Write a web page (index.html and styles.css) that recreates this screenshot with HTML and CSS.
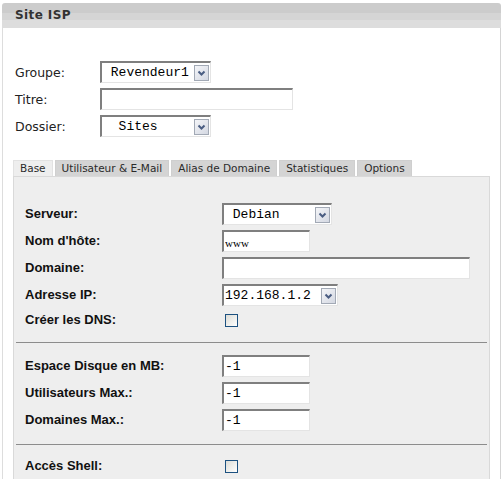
FILE: index.html
```html
<!DOCTYPE html>
<html lang="fr">
<head>
  <meta charset="UTF-8">
  <title>Site ISP</title>
  <link rel="stylesheet" href="styles.css">
</head>
<body>
  <div class="box">
    <div class="box-head">Site ISP</div>
    <div class="box-body">
      <div class="top-form">
        <div class="top-row">
          <label>Groupe:</label>
          <div class="select sel-group">
            <span class="select-value">&nbsp;Revendeur1</span>
            <span class="select-btn"><svg width="13" height="14" viewBox="0 0 13 14"><polyline points="3.5,5.5 6.5,8.5 9.5,5.5" fill="none" stroke="#4a5d82" stroke-width="2"/></svg></span>
          </div>
        </div>
        <div class="top-row">
          <label>Titre:</label>
          <input class="text-input in-title" type="text" value="">
        </div>
        <div class="top-row">
          <label>Dossier:</label>
          <div class="select sel-group">
            <span class="select-value">&nbsp;&nbsp;Sites</span>
            <span class="select-btn"><svg width="13" height="14" viewBox="0 0 13 14"><polyline points="3.5,5.5 6.5,8.5 9.5,5.5" fill="none" stroke="#4a5d82" stroke-width="2"/></svg></span>
          </div>
        </div>
      </div>

      <div class="tabs">
        <span class="tab active">Base</span>
        <span class="tab">Utilisateur &amp; E-Mail</span>
        <span class="tab">Alias de Domaine</span>
        <span class="tab">Statistiques</span>
        <span class="tab">Options</span>
      </div>

      <div class="tab-panel">
        <div class="field-row">
          <label>Serveur:</label>
          <div class="select sel-server">
            <span class="select-value">&nbsp;Debian</span>
            <span class="select-btn"><svg width="13" height="14" viewBox="0 0 13 14"><polyline points="3.5,5.5 6.5,8.5 9.5,5.5" fill="none" stroke="#4a5d82" stroke-width="2"/></svg></span>
          </div>
        </div>
        <div class="field-row">
          <label>Nom d'hôte:</label>
          <input class="text-input in-short in-host" type="text" value="www">
        </div>
        <div class="field-row">
          <label>Domaine:</label>
          <input class="text-input in-long" type="text" value="">
        </div>
        <div class="field-row">
          <label>Adresse IP:</label>
          <div class="select sel-ip">
            <span class="select-value">192.168.1.2</span>
            <span class="select-btn"><svg width="13" height="14" viewBox="0 0 13 14"><polyline points="3.5,5.5 6.5,8.5 9.5,5.5" fill="none" stroke="#4a5d82" stroke-width="2"/></svg></span>
          </div>
        </div>
        <div class="field-row check-row">
          <label>Créer les DNS:</label>
          <span class="checkbox"></span>
        </div>

        <hr>

        <div class="field-row">
          <label>Espace Disque en MB:</label>
          <input class="text-input in-short" type="text" value="-1">
        </div>
        <div class="field-row">
          <label>Utilisateurs Max.:</label>
          <input class="text-input in-short" type="text" value="-1">
        </div>
        <div class="field-row">
          <label>Domaines Max.:</label>
          <input class="text-input in-short" type="text" value="-1">
        </div>

        <hr>

        <div class="field-row check-row">
          <label>Accès Shell:</label>
          <span class="checkbox"></span>
        </div>
      </div>
    </div>
  </div>
</body>
</html>
```

FILE: styles.css
```css
body {
  margin: 0;
  background: #fff;
  font-family: "DejaVu Sans", Verdana, sans-serif;
  color: #222;
}
.box {
  margin: 3px 2px 0 2px;
}
.box-head {
  height: 25px;
  line-height: 25px;
  padding-left: 13px;
  border-radius: 3px 3px 0 0;
  background: linear-gradient(#cccccc 0, #cccccc 10px, #d5d5d5 10px, #d5d5d5 17px, #dddddd 17px, #dddddd 25px);
  font-size: 12px;
  font-weight: bold;
  letter-spacing: 0.4px;
  color: #333;
}
.box-body {
  border-left: 1px solid #dddddd;
  border-right: 1px solid #d4d4d4;
  padding: 33px 10px 0 10px;
}

/* top form */
.top-form {
  display: flex;
  flex-direction: column;
  gap: 5px;
  padding-left: 2px;
}
.top-row {
  display: flex;
  align-items: center;
  height: 22px;
}
.top-row label {
  width: 85px;
  font-size: 12.5px;
  color: #222;
}

/* fake selects and inputs */
.select,
.text-input {
  box-sizing: border-box;
  height: 22px;
  margin: 0;
  background: #fff;
  border-style: solid;
  border-width: 2px 1px 1px 2px;
  border-color: #7f7f7f #e4e4e4 #e4e4e4 #7f7f7f;
}
.select {
  display: flex;
  align-items: center;
  justify-content: space-between;
  padding-left: 1px;
}
.select-value {
  font-family: "Liberation Mono", "Courier New", monospace;
  font-size: 13px;
  color: #000;
  white-space: pre;
}
.select-btn {
  box-sizing: border-box;
  width: 15px;
  height: 16px;
  margin-right: 1px;
  border: 1px solid #a2a9b5;
  background: linear-gradient(135deg, #f4f5f8, #d4d8e2);
  display: flex;
  align-items: center;
  justify-content: center;
}
.sel-group { width: 111px; }
.sel-server { width: 110px; }
.sel-ip { width: 116px; }

.text-input {
  padding: 0 0 0 1px;
  font-family: "Liberation Mono", "Courier New", monospace;
  font-size: 13px;
  color: #000;
  outline: none;
}
.in-title { width: 193px; }
.in-short { width: 88px; }
.in-long { width: 248px; }
.in-host {
  font-family: "Liberation Serif", serif;
  font-size: 11px;
  padding-top: 3px;
}

/* tabs */
.tabs {
  display: flex;
  gap: 2px;
  margin-top: 23px;
  font-size: 10.5px;
}
.tab {
  height: 15px;
  line-height: 15px;
  padding: 0 6px;
  border: 1px solid #cfcfcf;
  border-bottom: none;
  background: #d4d4d4;
  color: #2a2a2a;
  white-space: nowrap;
}
.tab.active {
  background: #eeeeee;
  border-color: #e2e2e2;
}

.tab-panel {
  background: #eeeeee;
  border: 1px solid #d9d9d9;
  padding: 26px 0 20px 11px;
}
.field-row {
  display: grid;
  grid-template-columns: 197px 1fr;
  align-items: center;
  height: 22px;
  margin-bottom: 5px;
}
.field-row label {
  font-family: "Liberation Sans", Arial, sans-serif;
  font-size: 13px;
  font-weight: bold;
  line-height: 16px;
  color: #111;
}
.check-row {
  height: 18px;
  margin-bottom: 0;
}
.checkbox {
  box-sizing: border-box;
  width: 13px;
  height: 13px;
  margin-left: 3px;
  border: 1px solid #1c5180;
  background: linear-gradient(135deg, #dcdcd6, #ffffff);
}
.tab-panel hr {
  border: none;
  border-top: 1px solid #8c8c8c;
  margin: 13px 2px 12px -9px;
}
```
